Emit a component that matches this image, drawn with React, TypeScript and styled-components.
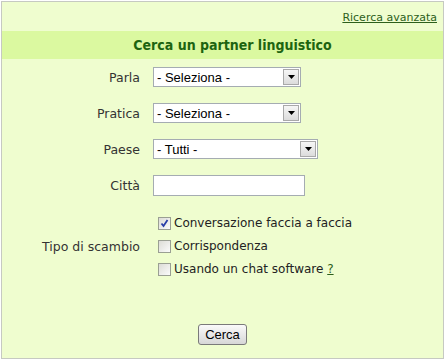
import React from 'react'
import styled, { createGlobalStyle } from 'styled-components'

const GlobalStyle = createGlobalStyle`
  html, body {
    margin: 0;
    padding: 0;
    background: #ffffff;
  }
  body {
    font-family: 'DejaVu Sans', Verdana, sans-serif;
  }
`

const Panel = styled.div`
  box-sizing: border-box;
  width: 443px;
  height: 358px;
  margin: 1px 0 0 1px;
  border: 1px solid #c6c9c2;
  background: #effdcf;
  display: flex;
  flex-direction: column;
`

const TopBar = styled.div`
  display: flex;
  justify-content: flex-end;
  padding: 9px 6px 0 0;
  height: 20px;
`

const AdvancedLink = styled.a`
  font-size: 11px;
  color: #2d5f1b;
  text-decoration: underline;
`

const Header = styled.h1`
  margin: 0;
  height: 28px;
  line-height: 28px;
  padding-left: 20px;
  background: #dbf9a0;
  color: #1d6410;
  font-family: 'DejaVu Sans Condensed', 'DejaVu Sans', sans-serif;
  font-size: 14px;
  font-weight: bold;
  text-align: center;
`

const Form = styled.form`
  flex: 1;
  display: flex;
  flex-direction: column;
`

const Row = styled.div<{ $height: number }>`
  display: grid;
  grid-template-columns: 138px 1fr;
  column-gap: 13px;
  align-items: center;
  height: ${({ $height }) => $height}px;
`

const Label = styled.label`
  text-align: right;
  font-size: 12.5px;
  color: #333333;
`

const SelectBox = styled.div<{ $width: number }>`
  box-sizing: border-box;
  display: flex;
  align-items: center;
  width: ${({ $width }) => $width}px;
  height: 20px;
  border: 1px solid #a5acb2;
  background: #ffffff;
`

const Select = styled.select`
  flex: 1;
  appearance: none;
  border: none;
  outline: none;
  background: transparent;
  padding: 0 0 0 3px;
  font-family: 'Liberation Sans', Arial, sans-serif;
  font-size: 13px;
  color: #000000;
  height: 18px;
`

const ArrowButton = styled.span`
  box-sizing: border-box;
  width: 16px;
  height: 16px;
  margin-right: 1px;
  border: 1px solid #a9a9a9;
  background: linear-gradient(#f6f6f6, #dcdcdc);
  display: flex;
  align-items: center;
  justify-content: center;
`

const TextInput = styled.input`
  box-sizing: border-box;
  width: 152px;
  height: 21px;
  border: 1px solid #a5acb2;
  background: #ffffff;
  font-family: 'Liberation Sans', Arial, sans-serif;
  font-size: 13px;
`

const Options = styled.div`
  display: flex;
  flex-direction: column;
  padding-left: 5px;
`

const OptionRow = styled.label`
  display: flex;
  align-items: center;
  gap: 3px;
  height: 23px;
  font-size: 12px;
  color: #222222;
`

const Box = styled.span`
  box-sizing: border-box;
  width: 13px;
  height: 13px;
  border: 1px solid #9a9f93;
  background: linear-gradient(135deg, #dcdcd6, #fbfbfb);
  display: flex;
  align-items: center;
  justify-content: center;
`

const Help = styled.a`
  color: #2d5f1b;
  text-decoration: underline;
`

const Footer = styled.div`
  flex: 1;
  display: flex;
  justify-content: center;
  align-items: flex-end;
  padding: 0 0 13px 0;
`

const Button = styled.button`
  box-sizing: border-box;
  height: 21px;
  padding: 0 6px;
  border: 1px solid #7a7a7a;
  border-radius: 3px;
  background: linear-gradient(#fafafa, #d7d7d7);
  font-family: 'Liberation Sans', Arial, sans-serif;
  font-size: 13px;
  color: #000000;
`

function Dropdown({ width, value }: { width: number; value: string }) {
  return (
    <SelectBox $width={width}>
      <Select defaultValue={value}>
        <option>{value}</option>
      </Select>
      <ArrowButton>
        <svg width="7" height="4" viewBox="0 0 7 4">
          <path d="M0 0h7L3.5 4z" fill="#000" />
        </svg>
      </ArrowButton>
    </SelectBox>
  )
}

function Check({ checked, children }: { checked?: boolean; children: React.ReactNode }) {
  return (
    <OptionRow>
      <Box>
        {checked && (
          <svg width="9" height="9" viewBox="0 0 9 9">
            <path d="M1.5 4.5l2 2.5 4-6" fill="none" stroke="#2a3fa8" strokeWidth="1.8" />
          </svg>
        )}
      </Box>
      <span>{children}</span>
    </OptionRow>
  )
}

export default function App() {
  return (
    <>
      <GlobalStyle />
      <Panel>
        <TopBar>
          <AdvancedLink href="#">Ricerca avanzata</AdvancedLink>
        </TopBar>
        <Header>Cerca un partner linguistico</Header>
        <Form>
          <Row $height={36}>
            <Label>Parla</Label>
            <Dropdown width={148} value="- Seleziona -" />
          </Row>
          <Row $height={36}>
            <Label>Pratica</Label>
            <Dropdown width={148} value="- Seleziona -" />
          </Row>
          <Row $height={36}>
            <Label>Paese</Label>
            <Dropdown width={165} value="- Tutti -" />
          </Row>
          <Row $height={36}>
            <Label>Città</Label>
            <TextInput type="text" />
          </Row>
          <Row $height={86}>
            <Label>Tipo di scambio</Label>
            <Options>
              <Check checked>Conversazione faccia a faccia</Check>
              <Check>Corrispondenza</Check>
              <Check>
                Usando un chat software <Help href="#">?</Help>
              </Check>
            </Options>
          </Row>
          <Footer>
            <Button type="button">Cerca</Button>
          </Footer>
        </Form>
      </Panel>
    </>
  )
}
